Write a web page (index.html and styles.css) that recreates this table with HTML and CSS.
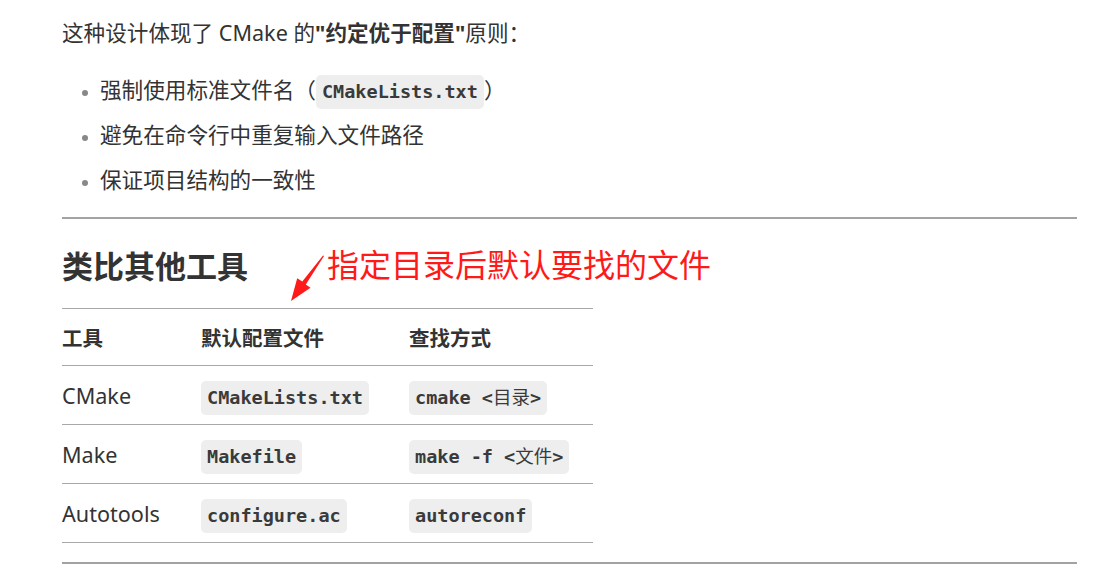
FILE: index.html
```html
<!DOCTYPE html>
<html>
<head>
    <title>CMake 约定优于配置</title>
    <link rel="stylesheet" href="styles.css">
</head>
<body>
    <div class="content">
        <p class="lead">这种设计体现了 CMake 的<strong>"约定优于配置"</strong>原则：</p>

        <ul class="points">
            <li>强制使用标准文件名（<code>CMakeLists.txt</code>）</li>
            <li>避免在命令行中重复输入文件路径</li>
            <li>保证项目结构的一致性</li>
        </ul>

        <hr>

        <div class="section-head">
            <h2>类比其他工具</h2>
            <!-- annotation drawn over the page -->
            <div class="note">
                <svg class="note-arrow" width="44" height="56" viewBox="0 0 44 56">
                    <polygon points="38,4 19.8,32.6 24.5,35.8 5,49 11.2,26.2 16.3,29.6 37,3.4" fill="#ff1a1a"/>
                </svg>
                <span class="note-text">指定目录后默认要找的文件</span>
            </div>
        </div>

        <table class="tools">
            <thead>
                <tr>
                    <th class="col-tool">工具</th>
                    <th class="col-file">默认配置文件</th>
                    <th class="col-find">查找方式</th>
                </tr>
            </thead>
            <tbody>
                <tr>
                    <td>CMake</td>
                    <td><code>CMakeLists.txt</code></td>
                    <td><code>cmake &lt;<span class="cjk">目录</span>&gt;</code></td>
                </tr>
                <tr>
                    <td>Make</td>
                    <td><code>Makefile</code></td>
                    <td><code>make -f &lt;<span class="cjk">文件</span>&gt;</code></td>
                </tr>
                <tr>
                    <td>Autotools</td>
                    <td><code>configure.ac</code></td>
                    <td><code>autoreconf</code></td>
                </tr>
            </tbody>
        </table>

        <hr class="end">
    </div>
</body>
</html>
```

FILE: styles.css
```css
body {
    margin: 0;
    background: #fff;
    color: #333;
    font-family: 'Noto Sans', 'Noto Sans CJK SC', sans-serif;
    font-size: 21.6px;
}

.content {
    padding: 17px 18px 0 62px;
}

.lead {
    margin: 0;
    line-height: 32px;
}

.lead strong {
    font-weight: bold;
}

/* bullet list */
.points {
    margin: 25px 0 0;
    padding-left: 38px;
    line-height: 32px;
}

.points li {
    height: 32px;
    margin-bottom: 13px;
}

.points li::marker {
    color: #888;
    font-size: 16px;
}

code {
    font-family: 'DejaVu Sans Mono', 'Liberation Mono', 'Noto Sans CJK SC', monospace;
    font-weight: bold;
    font-size: 18.5px;
    background: #eeeeee;
    border-radius: 5px;
    padding: 6px 6px 7px;
    color: #3a3a3a;
}

code .cjk {
    font-weight: normal;
    font-family: 'Noto Sans CJK SC', sans-serif;
}

hr {
    border: none;
    border-top: 2px solid #a3a3a3;
    margin: 21px 0 0;
}

/* heading + annotation */
.section-head {
    position: relative;
    margin-top: 27px;
}

h2 {
    margin: 0;
    font-size: 31px;
    line-height: 40px;
    font-weight: bold;
}

.note {
    position: absolute;
    left: 226px;
    top: -3px;
}

.note-arrow {
    position: absolute;
    left: -2px;
    top: 9px;
}

.note-text {
    position: absolute;
    left: 39px;
    top: 0;
    white-space: nowrap;
    color: #ff1a1a;
    font-family: 'Noto Sans CJK SC', sans-serif;
    font-size: 32px;
    line-height: 40px;
}

/* tools table */
.tools {
    margin-top: 22px;
    border-collapse: collapse;
    width: 531px;
}

.tools th,
.tools td {
    text-align: left;
    padding: 0;
    border-top: 1px solid #a8a8a8;
    border-bottom: 1px solid #a8a8a8;
}

.tools th {
    height: 56px;
    font-weight: bold;
    font-size: 20.5px;
}

.tools td {
    height: 58px;
}

.col-tool { width: 139px; }
.col-file { width: 208px; }
.col-find { width: 184px; }

hr.end {
    margin-top: 19px;
}
```
